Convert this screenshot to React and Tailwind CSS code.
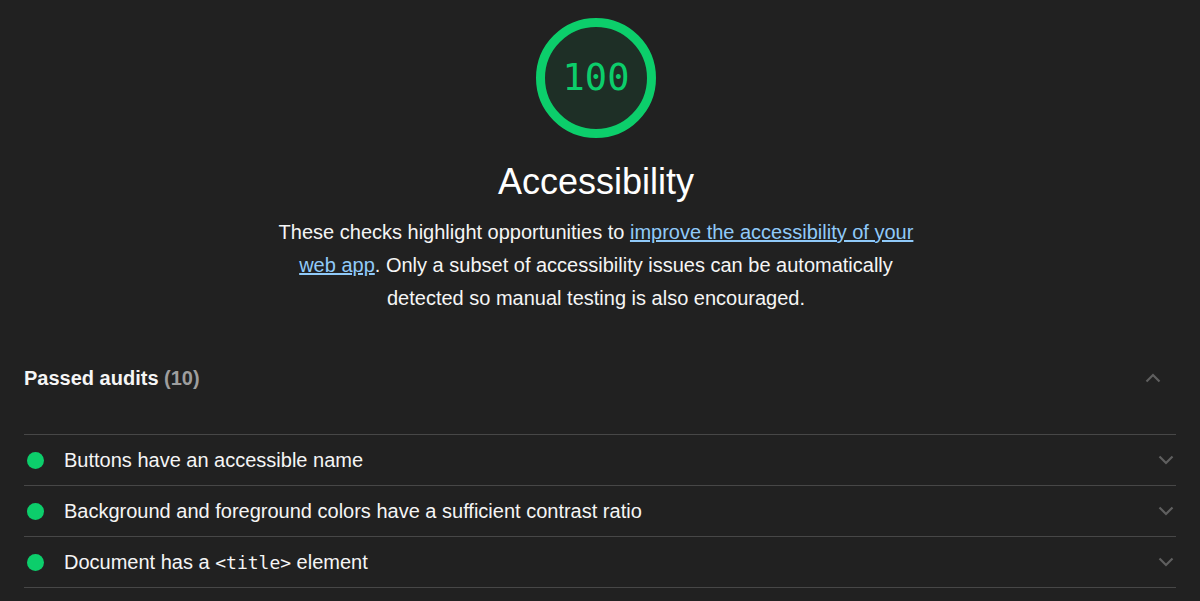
import React from "react";

const audits = [
  { id: "button-name", label: <>Buttons have an accessible name</> },
  { id: "color-contrast", label: <>Background and foreground colors have a sufficient contrast ratio</> },
  {
    id: "document-title",
    label: (
      <>
        Document has a{" "}
        <code className="font-['DejaVu_Sans_Mono',monospace] text-[18px]">&lt;title&gt;</code> element
      </>
    ),
  },
];

const Chevron = ({ up = false, className = "" }) => (
  <svg width="16" height="10" viewBox="0 0 16 10" className={className}>
    <path
      d={up ? "M1.5 8.5 L8 2 L14.5 8.5" : "M1.5 1.5 L8 8 L14.5 1.5"}
      fill="none"
      stroke="#5f5f5f"
      strokeWidth="2.2"
    />
  </svg>
);

const Gauge = ({ score }) => (
  <div className="relative w-[120px] h-[120px]">
    <svg width="120" height="120" viewBox="0 0 120 120">
      <circle cx="60" cy="60" r="55.5" fill="#1e2f26" stroke="#0cce6b" strokeWidth="9" />
    </svg>
    <div className="absolute inset-0 flex items-center justify-center font-['DejaVu_Sans_Mono',monospace] text-[37px] text-[#0cce6b]">
      {score}
    </div>
  </div>
);

const App = () => {
  return (
    <div className="min-h-screen bg-[#212121] text-[#f5f5f5] font-['Liberation_Sans',Arial,sans-serif]">
      {/* Category header */}
      <div className="flex flex-col items-center pt-[18px] pr-[8px]">
        <Gauge score={100} />
        <h1 className="mt-[22px] text-[36px] leading-[44px] text-white">Accessibility</h1>
        <p className="mt-[12px] w-[640px] text-center text-[20px] leading-[33px]">
          These checks highlight opportunities to{" "}
          <a href="#" className="text-[#90caf9] underline">
            improve the accessibility of your web app
          </a>
          . Only a subset of accessibility issues can be automatically detected so manual testing is
          also encouraged.
        </p>
      </div>

      {/* Passed audits */}
      <div className="px-6 mt-[51px]">
        <div className="flex items-center justify-between h-[24px]">
          <span className="text-[20px] font-bold">
            Passed audits <span className="text-[#9e9e9e]">(10)</span>
          </span>
          <Chevron up className="mr-[15px]" />
        </div>
        <div className="mt-[44px] border-t border-[#474747]">
          {audits.map((a) => (
            <div key={a.id} className="flex items-center h-[51px] border-b border-[#474747]">
              <span className="ml-[3px] w-[17px] h-[17px] rounded-full bg-[#0cce6b]" />
              <span className="ml-[20px] text-[20px]">{a.label}</span>
              <Chevron className="ml-auto mr-[2px]" />
            </div>
          ))}
        </div>
      </div>
    </div>
  );
};

export default App;
